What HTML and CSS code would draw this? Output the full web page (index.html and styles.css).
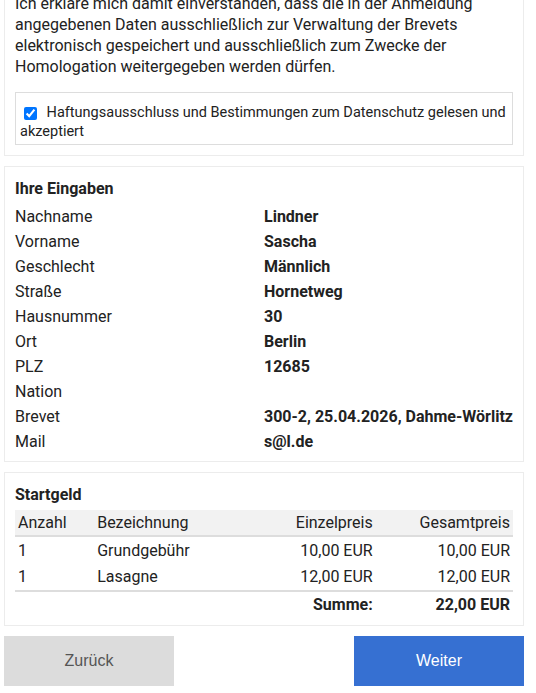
FILE: index.html
```html
<!DOCTYPE html>
<html lang="de">
<head>
<meta charset="utf-8">
<title>Anmeldung</title>
<link rel="stylesheet" href="styles.css">
</head>
<body>
<div class="page">
  <section class="card card-consent">
    <p class="consent-text">Ich erkläre mich damit einverstanden, dass die in der Anmeldung angegebenen Daten ausschließlich zur Verwaltung der Brevets elektronisch gespeichert und ausschließlich zum Zwecke der Homologation weitergegeben werden dürfen.</p>
    <div class="consent-box">
      <label class="consent-label"><input type="checkbox" class="consent-check" checked> Haftungsausschluss und Bestimmungen zum Datenschutz gelesen und akzeptiert</label>
    </div>
  </section>

  <section class="card card-data">
    <h2 class="card-title">Ihre Eingaben</h2>
    <div class="data-grid">
      <div class="data-label">Nachname</div><div class="data-value">Lindner</div>
      <div class="data-label">Vorname</div><div class="data-value">Sascha</div>
      <div class="data-label">Geschlecht</div><div class="data-value">Männlich</div>
      <div class="data-label">Straße</div><div class="data-value">Hornetweg</div>
      <div class="data-label">Hausnummer</div><div class="data-value">30</div>
      <div class="data-label">Ort</div><div class="data-value">Berlin</div>
      <div class="data-label">PLZ</div><div class="data-value">12685</div>
      <div class="data-label">Nation</div><div class="data-value"></div>
      <div class="data-label">Brevet</div><div class="data-value">300-2, 25.04.2026, Dahme-Wörlitz</div>
      <div class="data-label">Mail</div><div class="data-value">s@l.de</div>
    </div>
  </section>

  <section class="card card-fee">
    <h2 class="card-title card-title-fee">Startgeld</h2>
    <table class="fee-table">
      <colgroup>
        <col class="col-qty">
        <col class="col-name">
        <col class="col-unit">
        <col class="col-total">
      </colgroup>
      <thead>
        <tr>
          <th class="left">Anzahl</th>
          <th class="left">Bezeichnung</th>
          <th class="right">Einzelpreis</th>
          <th class="right">Gesamtpreis</th>
        </tr>
      </thead>
      <tbody>
        <tr>
          <td class="left">1</td>
          <td class="left">Grundgebühr</td>
          <td class="right">10,00 EUR</td>
          <td class="right">10,00 EUR</td>
        </tr>
        <tr>
          <td class="left">1</td>
          <td class="left">Lasagne</td>
          <td class="right">12,00 EUR</td>
          <td class="right">12,00 EUR</td>
        </tr>
      </tbody>
      <tfoot>
        <tr>
          <td></td>
          <td></td>
          <td class="right strong">Summe:</td>
          <td class="right strong">22,00 EUR</td>
        </tr>
      </tfoot>
    </table>
  </section>

  <div class="actions">
    <button type="button" class="btn btn-back">Zurück</button>
    <button type="button" class="btn btn-next">Weiter</button>
  </div>
</div>
</body>
</html>
```

FILE: styles.css
```css
html, body {
  margin: 0;
  padding: 0;
  background: #ffffff;
}

body {
  font-family: Roboto, "Liberation Sans", sans-serif;
  font-size: 16px;
  color: #222222;
}

.page {
  width: 520px;
  margin: -18px 0 0 4px;
  display: flex;
  flex-direction: column;
  gap: 10px;
}

.card {
  border: 1px solid #ececec;
  padding: 10px;
  background: #ffffff;
}

.consent-text {
  margin: 0 0 15px;
  line-height: 21px;
}

.consent-box {
  border: 1px solid #dddddd;
  padding: 10px 4px 3px;
}

.consent-label {
  font-size: 14.5px;
  line-height: 19px;
  display: block;
}

.consent-check {
  width: 13px;
  height: 13px;
  margin: 4px 6px 0 4px;
  vertical-align: top;
}

.card-data {
  padding-top: 11px;
  padding-bottom: 7px;
}

.card-title {
  margin: 0 0 4px;
  font-size: 16px;
  font-weight: 700;
  line-height: 22px;
}

.card-title-fee {
  margin-bottom: 4px;
}

.data-grid {
  display: grid;
  grid-template-columns: 249px 1fr;
  line-height: 25px;
}

.data-value {
  font-weight: 700;
  min-height: 25px;
}

.card-fee {
  padding-top: 11px;
  padding-bottom: 7px;
}

.fee-table {
  width: 100%;
  border-collapse: collapse;
  table-layout: fixed;
}

.col-qty { width: 79px; }
.col-name { width: 150px; }
.col-unit { width: 131px; }
.col-total { width: 137px; }

.fee-table th {
  font-weight: 400;
  background: #f2f2f2;
  line-height: 19px;
  padding: 3px;
  border-bottom: 2px solid #dddddd;
}

.fee-table td {
  line-height: 20px;
  padding: 3px;
}

.fee-table tbody tr:first-child td {
  padding-top: 4px;
}

.fee-table tfoot td {
  border-top: 2px solid #dddddd;
}

.left { text-align: left; }
.right { text-align: right; }
.strong { font-weight: 700; }

.actions {
  display: flex;
  justify-content: space-between;
}

.btn {
  width: 170px;
  height: 50px;
  border: none;
  font-family: "Liberation Sans", Arial, sans-serif;
  font-size: 16px;
  cursor: pointer;
}

.btn-back {
  background: #dcdcdc;
  color: #555555;
}

.btn-next {
  background: #3670d2;
  color: #ffffff;
}
```
